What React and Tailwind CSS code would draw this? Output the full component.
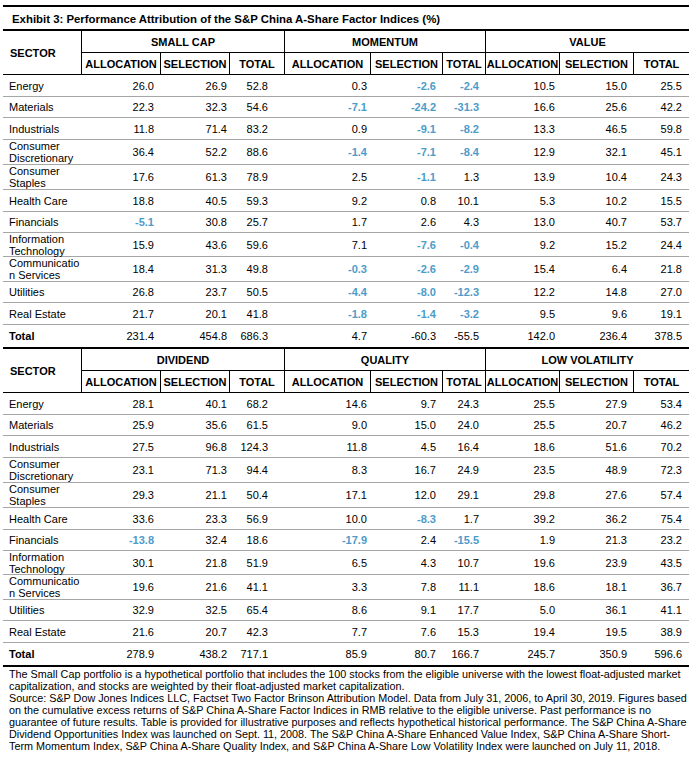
const font = "font-['Liberation_Sans',Arial,sans-serif]"
const cols = 'grid grid-cols-[79px_79px_69px_55px_86px_72px_43px_74px_74px_55px]'

// right padding of each number column, read off the reference
const pads = [
  'pr-[7px]',
  'pr-[3px]',
  'pr-[17px]',
  'pr-[4px]',
  'pr-[7px]',
  'pr-[7px]',
  'pr-[5px]',
  'pr-[7px]',
  'pr-[7px]',
]

const labels = [
  { name: 'Energy', h: 'h-[22px]' },
  { name: 'Materials', h: 'h-[21px]' },
  { name: 'Industrials', h: 'h-[22px]' },
  { name: ['Consumer', 'Discretionary'], h: 'h-[25px]' },
  { name: ['Consumer', 'Staples'], h: 'h-[25px]' },
  { name: 'Health Care', h: 'h-[22px]' },
  { name: 'Financials', h: 'h-[21px]' },
  { name: ['Information', 'Technology'], h: 'h-[24px]' },
  { name: ['Communicatio', 'n Services'], h: 'h-[25px]' },
  { name: 'Utilities', h: 'h-[21px]' },
  { name: 'Real Estate', h: 'h-[22px]' },
]

const topData = [
  ['26.0', '26.9', '52.8', '0.3', '-2.6', '-2.4', '10.5', '15.0', '25.5'],
  ['22.3', '32.3', '54.6', '-7.1', '-24.2', '-31.3', '16.6', '25.6', '42.2'],
  ['11.8', '71.4', '83.2', '0.9', '-9.1', '-8.2', '13.3', '46.5', '59.8'],
  ['36.4', '52.2', '88.6', '-1.4', '-7.1', '-8.4', '12.9', '32.1', '45.1'],
  ['17.6', '61.3', '78.9', '2.5', '-1.1', '1.3', '13.9', '10.4', '24.3'],
  ['18.8', '40.5', '59.3', '9.2', '0.8', '10.1', '5.3', '10.2', '15.5'],
  ['-5.1', '30.8', '25.7', '1.7', '2.6', '4.3', '13.0', '40.7', '53.7'],
  ['15.9', '43.6', '59.6', '7.1', '-7.6', '-0.4', '9.2', '15.2', '24.4'],
  ['18.4', '31.3', '49.8', '-0.3', '-2.6', '-2.9', '15.4', '6.4', '21.8'],
  ['26.8', '23.7', '50.5', '-4.4', '-8.0', '-12.3', '12.2', '14.8', '27.0'],
  ['21.7', '20.1', '41.8', '-1.8', '-1.4', '-3.2', '9.5', '9.6', '19.1'],
]
const topTotal = ['231.4', '454.8', '686.3', '4.7', '-60.3', '-55.5', '142.0', '236.4', '378.5']

const bottomData = [
  ['28.1', '40.1', '68.2', '14.6', '9.7', '24.3', '25.5', '27.9', '53.4'],
  ['25.9', '35.6', '61.5', '9.0', '15.0', '24.0', '25.5', '20.7', '46.2'],
  ['27.5', '96.8', '124.3', '11.8', '4.5', '16.4', '18.6', '51.6', '70.2'],
  ['23.1', '71.3', '94.4', '8.3', '16.7', '24.9', '23.5', '48.9', '72.3'],
  ['29.3', '21.1', '50.4', '17.1', '12.0', '29.1', '29.8', '27.6', '57.4'],
  ['33.6', '23.3', '56.9', '10.0', '-8.3', '1.7', '39.2', '36.2', '75.4'],
  ['-13.8', '32.4', '18.6', '-17.9', '2.4', '-15.5', '1.9', '21.3', '23.2'],
  ['30.1', '21.8', '51.9', '6.5', '4.3', '10.7', '19.6', '23.9', '43.5'],
  ['19.6', '21.6', '41.1', '3.3', '7.8', '11.1', '18.6', '18.1', '36.7'],
  ['32.9', '32.5', '65.4', '8.6', '9.1', '17.7', '5.0', '36.1', '41.1'],
  ['21.6', '20.7', '42.3', '7.7', '7.6', '15.3', '19.4', '19.5', '38.9'],
]
const bottomTotal = ['278.9', '438.2', '717.1', '85.9', '80.7', '166.7', '245.7', '350.9', '596.6']

const notes = [
  'The Small Cap portfolio is a hypothetical portfolio that includes the 100 stocks from the eligible universe with the lowest float-adjusted market',
  'capitalization, and stocks are weighted by their float-adjusted market capitalization.',
  'Source: S&P Dow Jones Indices LLC, Factset Two Factor Brinson Attribution Model. Data from July 31, 2006, to April 30, 2019. Figures based',
  'on the cumulative excess returns of S&P China A-Share Factor Indices in RMB relative to the eligible universe. Past performance is no',
  'guarantee of future results. Table is provided for illustrative purposes and reflects hypothetical historical performance. The S&P China A-Share',
  'Dividend Opportunities Index was launched on Sept. 11, 2008. The S&P China A-Share Enhanced Value Index, S&P China A-Share Short-',
  'Term Momentum Index, S&P China A-Share Quality Index, and S&P China A-Share Low Volatility Index were launched on July 11, 2018.',
]

const Header = ({ groups }) => (
  <div className={cols + ' grid-rows-[22px_21px] border-b border-black font-bold'}>
    <div className="row-span-2 flex items-center border-r border-black pl-[7px]">SECTOR</div>
    {groups.map((g, i) => (
      <div
        key={g}
        className={
          'col-span-3 flex items-center justify-center border-b border-black' +
          (i < 2 ? ' border-r' : '')
        }
      >
        {g}
      </div>
    ))}
    {groups.map((g, i) =>
      ['ALLOCATION', 'SELECTION', 'TOTAL'].map((s, j) => (
        <div
          key={g + s}
          className={
            'flex items-center justify-center border-black' +
            (i === 2 && j === 2 ? '' : ' border-r')
          }
        >
          {s}
        </div>
      ))
    )}
  </div>
)

const Row = ({ label, h, values, total }) => (
  <div
    className={
      cols +
      ' ' +
      h +
      (total ? ' border-b-2 border-black' : ' border-b border-[#a6a6a6]')
    }
  >
    <div className={'flex items-center pl-[6px]' + (total ? ' font-bold' : '')}>
      {Array.isArray(label) ? (
        <span>
          {label[0]}
          <br />
          {label[1]}
        </span>
      ) : (
        label
      )}
    </div>
    {values.map((v, i) => {
      const neg = !total && v.startsWith('-')
      return (
        <div
          key={i}
          className={
            'flex items-center justify-end ' +
            pads[i] +
            (neg ? ' font-bold text-[#4d9bc9]' : '')
          }
        >
          {v}
        </div>
      )
    })}
  </div>
)

const Section = ({ groups, data, totals }) => (
  <div>
    <Header groups={groups} />
    {data.map((values, i) => (
      <Row key={i} label={labels[i].name} h={labels[i].h} values={values} />
    ))}
    <Row label="Total" h="h-[24px]" values={totals} total />
  </div>
)

export default function App() {
  return (
    <div className={'w-[698px] h-[761px] bg-white pt-[5px] pl-[3px] text-[11px] leading-[12px] text-black ' + font}>
      <div className="w-[686px]">
        <div className="flex h-[26px] items-center border-y-2 border-black pl-[9px] pt-[2px] text-[11.4px] font-bold">
          Exhibit 3: Performance Attribution of the S&amp;P China A-Share Factor Indices (%)
        </div>
        <Section groups={['SMALL CAP', 'MOMENTUM', 'VALUE']} data={topData} totals={topTotal} />
        <Section groups={['DIVIDEND', 'QUALITY', 'LOW VOLATILITY']} data={bottomData} totals={bottomTotal} />
        <div className="pl-[6px] pt-[1px] text-[10.8px]">
          {notes.map((line) => (
            <div key={line} className="whitespace-nowrap">
              {line}
            </div>
          ))}
        </div>
      </div>
    </div>
  )
}
